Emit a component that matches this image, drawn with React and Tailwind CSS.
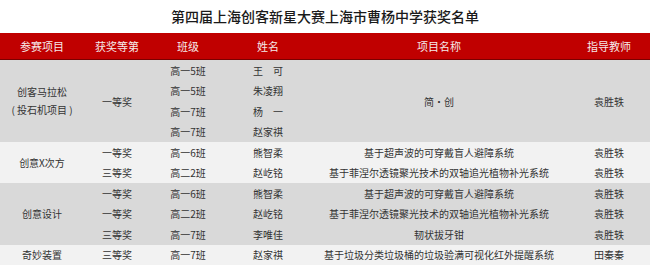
import React from "react";

const groups = [
  {
    bg: "bg-[#d9d9d9]",
    name: ["创客马拉松", "( 投石机项目 )"],
    award: ["一等奖"],
    cls: ["高一5班", "高一5班", "高一7班", "高一7班"],
    names: ["王　可", "朱凌翔", "杨　一", "赵家祺"],
    project: ["简·创"],
    teacher: ["袁胜轶"],
  },
  {
    bg: "bg-[#f2f2f2]",
    name: ["创意X次方"],
    award: ["一等奖", "三等奖"],
    cls: ["高一6班", "高二2班"],
    names: ["熊智柔", "赵屹铭"],
    project: ["基于超声波的可穿戴盲人避障系统", "基于菲涅尔透镜聚光技术的双轴追光植物补光系统"],
    teacher: ["袁胜轶", "袁胜轶"],
  },
  {
    bg: "bg-[#d9d9d9]",
    name: ["创意设计"],
    award: ["一等奖", "一等奖", "三等奖"],
    cls: ["高一6班", "高二2班", "高一7班"],
    names: ["熊智柔", "赵屹铭", "李唯佳"],
    project: ["基于超声波的可穿戴盲人避障系统", "基于菲涅尔透镜聚光技术的双轴追光植物补光系统", "韧状拔牙钳"],
    teacher: ["袁胜轶", "袁胜轶", "袁胜轶"],
  },
  {
    bg: "bg-[#f2f2f2]",
    name: ["奇妙装置"],
    award: ["三等奖"],
    cls: ["高一7班"],
    names: ["赵家祺"],
    project: ["基于垃圾分类垃圾桶的垃圾验满可视化红外提醒系统"],
    teacher: ["田秦秦"],
  },
];

const widths = ["w-[84px]", "w-[66px]", "w-[76px]", "w-[84px]", "w-[258px]", "w-[82px]"];

function Column({ items, width }) {
  return (
    <div className={`${width} flex flex-col shrink-0`}>
      {items.map((t, i) => (
        <div
          key={i}
          className="flex-1 min-h-[20.5px] flex items-center justify-center text-center whitespace-nowrap"
        >
          {t}
        </div>
      ))}
    </div>
  );
}

function Group({ g }) {
  return (
    <div className={`flex ${g.bg}`}>
      <div className={`${widths[0]} shrink-0 flex flex-col items-center justify-center leading-[18px] whitespace-nowrap`}>
        {g.name.map((t) => (
          <div key={t}>{t}</div>
        ))}
      </div>
      <Column items={g.award} width={widths[1]} />
      <Column items={g.cls} width={widths[2]} />
      <Column items={g.names} width={widths[3]} />
      <Column items={g.project} width={widths[4]} />
      <Column items={g.teacher} width={widths[5]} />
    </div>
  );
}

export default function App() {
  return (
    <div className="w-[650px] h-[266px] overflow-hidden bg-white text-[#333] text-[10px] font-['Noto_Sans_CJK_SC','Noto_Sans',sans-serif]">
      <div className="h-[33px] flex items-center justify-center text-[14px] text-[#1a1a1a] font-medium">
        第四届上海创客新星大赛上海市曹杨中学获奖名单
      </div>
      <div className="flex h-[27px] bg-[#c00000] border-b border-[#7a0000] text-[11px] text-[#f5eaea]">
        {["参赛项目", "获奖等第", "班级", "姓名", "项目名称", "指导教师"].map((h, i) => (
          <div key={h} className={`${widths[i]} shrink-0 flex items-center justify-center`}>
            {h}
          </div>
        ))}
      </div>
      {groups.map((g, i) => (
        <Group key={i} g={g} />
      ))}
    </div>
  );
}
